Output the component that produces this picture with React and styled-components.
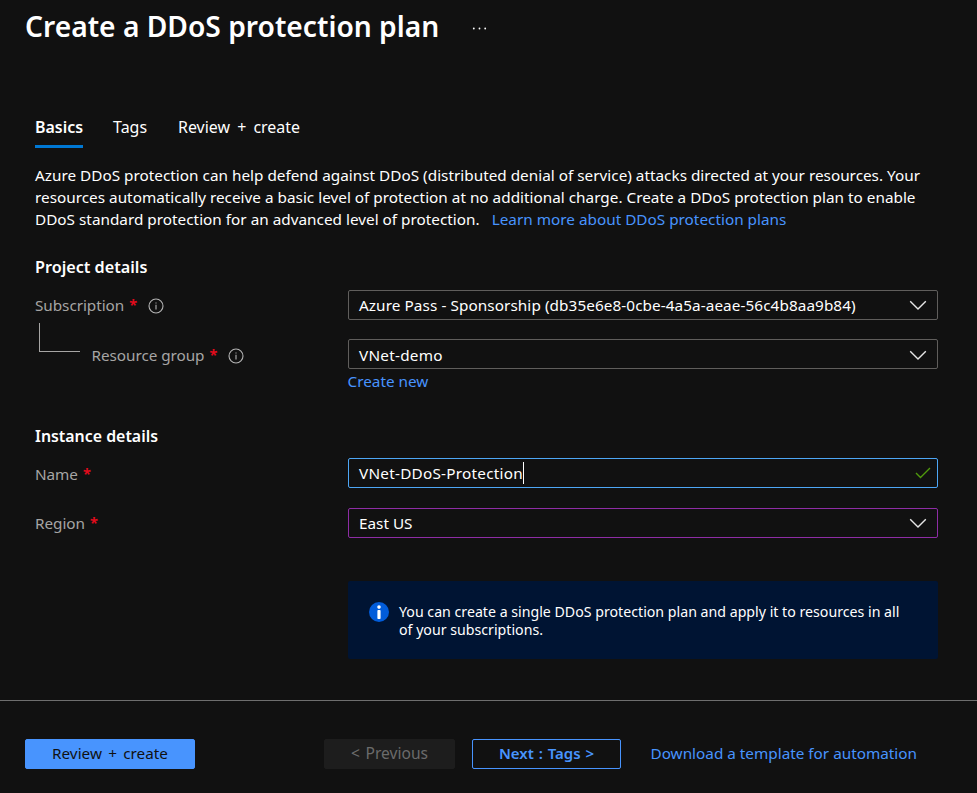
import React from "react";
import styled, { createGlobalStyle } from "styled-components";

const GlobalStyle = createGlobalStyle`
  * { box-sizing: border-box; }
  body { margin: 0; background: #111111; }
`;

const Page = styled.div`
  width: 977px;
  height: 793px;
  display: flex;
  flex-direction: column;
  overflow: hidden;
  background: #111111;
  color: #ffffff;
  font-family: "Noto Sans", "Open Sans", sans-serif;
  font-size: 15.3px;
  line-height: 22px;
  white-space: nowrap;
`;

const Header = styled.header`
  height: 115px;
  padding: 6px 0 0 25px;
  display: flex;
  align-items: flex-start;
`;

const Title = styled.h1`
  margin: 0;
  width: 447px;
  font-size: 28.2px;
  font-weight: 600;
  line-height: 40px;
`;

const MoreDots = styled.svg`
  margin-top: 21px;
  fill: #ffffff;
`;

const Main = styled.main`
  height: 585px;
  padding: 0 39px 0 35px;
  display: flex;
  flex-direction: column;
`;

const Tabs = styled.nav`
  display: flex;
  height: 33px;
`;

const Tab = styled.a`
  margin-right: ${(p) => p.$gap || 0}px;
  font-size: 15.95px;
  font-weight: ${(p) => (p.$active ? 600 : 400)};
  line-height: 24px;
  word-spacing: 3px;
  border-bottom: 3px solid ${(p) => (p.$active ? "#0078d4" : "transparent")};
`;

const Intro = styled.p`
  margin: 16px 0 0;
  white-space: pre;
  letter-spacing: 0.01px;
`;

const Link = styled.a`
  color: #4894fe;
`;

const SectionTitle = styled.h2`
  margin: ${(p) => p.$top}px 0 0;
  font-size: ${(p) => p.$size}px;
  font-weight: 600;
  line-height: 24px;
`;

const FieldRow = styled.div`
  margin-top: ${(p) => p.$top}px;
  display: flex;
  height: 30px;
`;

const Label = styled.label`
  width: 313px;
  padding-top: ${(p) => p.$drop || 0}px;
  display: flex;
  align-items: center;
  color: #a6a5a4;
  letter-spacing: -0.05px;
`;

const Required = styled.span`
  margin: -2px 0 0 5px;
  color: #e00b1c;
  font-size: 14.5px;
  font-weight: 700;
`;

const Elbow = styled.span`
  align-self: flex-start;
  width: 41px;
  height: 29px;
  margin: -18px 11.5px 0 4px;
  border: solid #a6a5a4;
  border-width: 0 0 1px 1px;
`;

const InfoIcon = styled.svg`
  margin: 1px 0 0 10.5px;
  stroke: #b4b4b4;
  fill: none;
`;

const Field = styled.div`
  flex: 1;
  padding: ${(p) => p.$drop || 0}px 10px 0 10px;
  display: flex;
  align-items: center;
  border: 1px solid ${(p) => p.$border || "#605e5c"};
  border-radius: 2px;
  letter-spacing: ${(p) => p.$tracking || 0}px;
`;

const Caret = styled.span`
  width: 1px;
  height: 22px;
  margin-top: -1px;
  background: #ffffff;
`;

const FieldIcon = styled.svg`
  margin: 0 ${(p) => p.$right || 0}px 0 auto;
  fill: none;
  stroke: ${(p) => p.$color || "#e6e6e6"};
  stroke-width: 1.4;
`;

const FieldHint = styled.div`
  margin: 1px 0 0 312.5px;
`;

const Notice = styled.aside`
  margin: 43px 0 0 313px;
  width: 590px;
  height: 78px;
  padding: 21px 0 0 21px;
  display: flex;
  gap: 10px;
  background: #001433;
  border-radius: 2px;
  font-size: 14.18px;
  line-height: 18px;
`;

const NoticeText = styled.div`
  padding-top: 1px;
`;

const Footer = styled.footer`
  height: 93px;
  padding: 38px 0 0 25px;
  display: flex;
  align-items: flex-start;
  border-top: 1px solid #6e6e6e;
  line-height: 28px;
`;

const Button = styled.button`
  width: ${(p) => p.$width}px;
  height: 30px;
  margin-right: ${(p) => p.$gap}px;
  padding: 0 0 2px;
  font: inherit;
  font-size: ${(p) => p.$size || 15.3}px;
  font-weight: ${(p) => p.$weight || 400};
  line-height: 26px;
  word-spacing: ${(p) => p.$spacing || 0}px;
  color: ${(p) => p.$color};
  background: ${(p) => p.$fill || "transparent"};
  border: 1px solid ${(p) => p.$border || p.$fill};
  border-radius: 2px;
`;

const Info = () => (
  <InfoIcon width="16" height="16" viewBox="0 0 16 16">
    <circle cx="8" cy="8" r="7" strokeWidth="1.1" />
    <path d="M8 6.8V11.5M8 4.5V5.6" strokeWidth="1.1" />
  </InfoIcon>
);

const Chevron = () => (
  <FieldIcon width="18" height="10" viewBox="0 0 18 10">
    <path d="M1.2 1.2L9 9L16.8 1.2" />
  </FieldIcon>
);

export default function App() {
  return (
    <Page>
      <GlobalStyle />
      <Header>
        <Title>Create a DDoS protection plan</Title>
        <MoreDots width="16" height="4" viewBox="0 0 16 4">
          <circle cx="1.8" cy="1.5" r="0.9" />
          <circle cx="7.5" cy="1.5" r="0.9" />
          <circle cx="13.2" cy="1.5" r="0.9" />
        </MoreDots>
      </Header>

      <Main>
        <Tabs>
          <Tab $active $gap={30}>Basics</Tab>
          <Tab $gap={31}>Tags</Tab>
          <Tab>Review + create</Tab>
        </Tabs>

        <Intro>
          Azure DDoS protection can help defend against DDoS (distributed denial of service) attacks directed at your resources. Your{"\n"}
          resources automatically receive a basic level of protection at no additional charge. Create a DDoS protection plan to enable{"\n"}
          DDoS standard protection for an advanced level of protection.{"  "}
          <Link> Learn more about DDoS protection plans</Link>
        </Intro>

        <SectionTitle $top={25} $size={16.2}>Project details</SectionTitle>
        <FieldRow $top={11}>
          <Label>
            Subscription<Required>*</Required>
            <Info />
          </Label>
          <Field $tracking={0.08}>
            Azure Pass - Sponsorship (db35e6e8-0cbe-4a5a-aeae-56c4b8aa9b84)
            <Chevron />
          </Field>
        </FieldRow>
        <FieldRow $top={19}>
          <Label $drop={2}>
            <Elbow />
            Resource group<Required>*</Required>
            <Info />
          </Label>
          <Field $drop={2} $tracking={0.25}>
            VNet-demo
            <Chevron />
          </Field>
        </FieldRow>
        <FieldHint>
          <Link>Create new</Link>
        </FieldHint>

        <SectionTitle $top={32} $size={15.9}>Instance details</SectionTitle>
        <FieldRow $top={10}>
          <Label $drop={2}>
            Name<Required>*</Required>
          </Label>
          <Field $border="#4da6f5" $tracking={0.25}>
            VNet-DDoS-Protection
            <Caret />
            <FieldIcon width="16" height="12" viewBox="0 0 16 12" $right={-4} $color="#4f9a0c">
              <path d="M1 6L5.5 10.5L15 1" />
            </FieldIcon>
          </Field>
        </FieldRow>
        <FieldRow $top={20}>
          <Label>
            Region<Required>*</Required>
          </Label>
          <Field $border="#8e2da5">
            East US
            <Chevron />
          </Field>
        </FieldRow>

        <Notice>
          <svg width="20" height="20" viewBox="0 0 20 20">
            <circle cx="10" cy="10" r="10" fill="#015cda" />
            <circle cx="10" cy="5.1" r="1.8" fill="#ffffff" />
            <rect x="8.4" y="8" width="3.2" height="9" rx="0.8" fill="#ffffff" />
          </svg>
          <NoticeText>
            You can create a single DDoS protection plan and apply it to resources in all
            <br />
            of your subscriptions.
          </NoticeText>
        </Notice>
      </Main>

      <Footer>
        <Button $width={170} $gap={129} $fill="#4894fe" $color="#111111" $spacing={2.3}>
          Review + create
        </Button>
        <Button $width={131} $gap={17} $fill="#1d1d1d" $color="#6b6b6b" $size={15.6} $spacing={1.5}>
          &lt; Previous
        </Button>
        <Button $width={149} $gap={29.5} $border="#4894fe" $color="#4894fe" $weight={600} $size={15} $spacing={1}>
          Next : Tags &gt;
        </Button>
        <Link>Download a template for automation</Link>
      </Footer>
    </Page>
  );
}
